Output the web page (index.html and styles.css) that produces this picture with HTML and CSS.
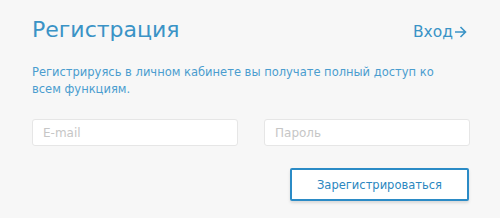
FILE: index.html
```html
<!DOCTYPE html>
<html lang="ru">
<head>
<meta charset="utf-8">
<link rel="stylesheet" href="styles.css">
</head>
<body>
<div class="card">
  <div class="head">
    <h1 class="title">Регистрация</h1>
    <a class="login" href="#">Вход<svg class="arrow" width="13" height="12" viewBox="0 0 13 12"><path d="M1 6H11.5M6.5 1L11.5 6L6.5 11" fill="none" stroke="currentColor" stroke-width="1.6"/></svg></a>
  </div>
  <p class="desc">Регистрируясь в личном кабинете вы получате полный доступ ко всем функциям.</p>
  <div class="fields">
    <input class="field" type="text" placeholder="E-mail">
    <input class="field" type="password" placeholder="Пароль">
  </div>
  <div class="actions">
    <button class="btn">Зарегистрироваться</button>
  </div>
</div>
</body>
</html>
```
FILE: styles.css
```css
html, body {
  margin: 0;
  padding: 0;
  background: #f7f7f7;
}
body {
  font-family: "DejaVu Sans", "Open Sans", sans-serif;
  width: 500px;
  height: 218px;
  overflow: hidden;
}
.card {
  padding: 15px 31px 0 32px;
}
.head {
  display: flex;
  justify-content: space-between;
  align-items: baseline;
}
.title {
  margin: 0;
  font-weight: 400;
  font-size: 22px;
  line-height: 30px;
  color: #3a93c6;
}
.login {
  display: flex;
  align-items: center;
  gap: 1px;
  font-size: 15.5px;
  color: #3a93c6;
  text-decoration: none;
  margin-right: 2px;
}
.arrow {
  display: block;
}
.desc {
  margin: 19px 0 0 0;
  max-width: 415px;
  font-size: 11.5px;
  line-height: 17px;
  color: #4a9dcf;
}
.fields {
  display: grid;
  grid-template-columns: 206px 206px;
  column-gap: 26px;
  margin-top: 21px;
}
.field {
  box-sizing: border-box;
  height: 27px;
  border: 1px solid #e6e6e6;
  border-radius: 3px;
  background: #fff;
  padding: 0 10px;
  font-family: inherit;
  font-size: 12px;
  outline: none;
}
.field::placeholder {
  color: #c6c6c6;
}
.actions {
  display: flex;
  justify-content: flex-end;
  margin-top: 22px;
}
.btn {
  box-sizing: border-box;
  width: 179px;
  height: 33px;
  background: #fff;
  border: 2px solid #2b8bc6;
  border-radius: 2px;
  box-shadow: 0 2px 3px rgba(0,0,0,0.12);
  font-family: inherit;
  font-size: 11.5px;
  color: #2b87c0;
  cursor: pointer;
}
```
